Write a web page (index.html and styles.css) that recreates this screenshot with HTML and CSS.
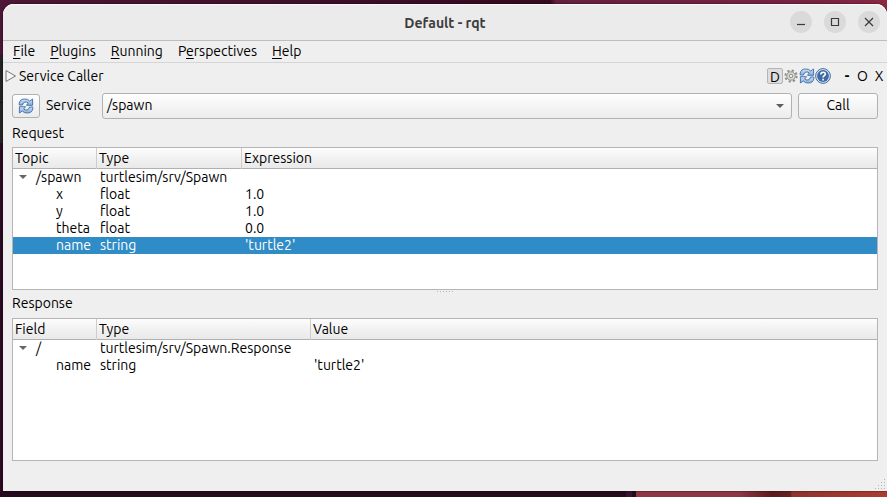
FILE: index.html
```html
<!DOCTYPE html>
<html lang="en">
<head>
<meta charset="utf-8">
<title>Default - rqt</title>
<link rel="stylesheet" href="styles.css">
</head>
<body>
<svg class="defs" width="0" height="0" aria-hidden="true">
  <defs>
    <linearGradient id="blue" x1="0" y1="0" x2="0" y2="1"><stop offset="0" stop-color="#cfe0f3"/><stop offset="1" stop-color="#83aedb"/></linearGradient>
    <symbol id="refresh" viewBox="0 0 16 16">
      <path d="M1.2 7V5.2Q2 1 6.5 1Q10 .8 11.7 3L14.6 1V7.3H8.5L10.3 5Q9 3.7 7 4Q5 4.4 4.5 7Z" fill="url(#blue)" stroke="#3b6ca9" stroke-width=".9"/>
      <path d="M14.8 9V10.8Q14 15 9.5 15Q6 15.2 4.3 13L1.4 15V8.7H7.5L5.7 11Q7 12.3 9 12Q11 11.6 11.5 9Z" fill="url(#blue)" stroke="#3b6ca9" stroke-width=".9"/>
    </symbol>
  </defs>
</svg>
<div class="window">
  <header class="titlebar">
    <h1><span class="t-title">Default - rqt</span></h1>
    <div class="controls">
      <svg viewBox="0 0 22 22"><circle cx="11" cy="11" r="11"/><path d="M7 13.5h8"/></svg>
      <svg viewBox="0 0 22 22"><circle cx="11" cy="11" r="11"/><path d="M7.5 7.5h7v7h-7z"/></svg>
      <svg viewBox="0 0 22 22"><circle cx="11" cy="11" r="11"/><path d="M7 7l8 8M15 7l-8 8"/></svg>
    </div>
  </header>
  <nav class="menubar">
    <span class="m-file"><u>F</u>ile</span><span class="m-plugins"><u>P</u>lugins</span><span class="m-running"><u>R</u>unning</span><span class="m-persp">P<u>e</u>rspectives</span><span class="m-help"><u>H</u>elp</span>
  </nav>
  <div class="dock">
    <svg class="tri" viewBox="0 0 12 14"><path d="M1 1.5v11L10.5 7z" fill="#f6f6f6" stroke="#777"/></svg>
    <span class="dock-name">Service Caller</span>
    <div class="dock-tools">
      <span class="dbtn">D</span>
      <svg class="gear" viewBox="0 0 14 14"><circle cx="7" cy="7" r="5.6" fill="none" stroke="#8c8e87" stroke-width="2" stroke-dasharray="2.2 2.2"/><circle cx="7" cy="7" r="4.2" fill="#dddeda" stroke="#8c8e87"/><circle cx="7" cy="7" r="1.8" fill="#eee" stroke="#8c8e87"/></svg>
      <svg class="ref" viewBox="0 0 16 16"><use href="#refresh"/></svg>
      <svg class="help" viewBox="0 0 16 16"><circle cx="8" cy="8" r="7.4" fill="#d5e1ef" stroke="#4b72a5"/><circle cx="8" cy="8" r="5.9" fill="#3f6ca5"/><path d="M5.8 6.5Q5.8 4.2 8.1 4.2Q10.3 4.2 10.3 6.1Q10.3 7.2 9 7.9Q8.1 8.5 8.1 9.5M8.1 10.7v1.7" fill="none" stroke="#fff" stroke-width="1.6"/></svg>
      <span class="dash">-</span><span class="oh">O</span><span class="ex">X</span>
    </div>
  </div>
  <div class="service">
    <button class="btn refresh"><svg viewBox="0 0 16 16"><use href="#refresh"/></svg></button>
    <span class="service-label">Service</span>
    <div class="btn combo"><span class="s-spawn">/spawn</span><svg viewBox="0 0 8 4"><path d="M0 0h8L4 4z" fill="#5c5c5c"/></svg></div>
    <button class="btn call">Call</button>
  </div>
  <div class="label"><span class="l-request">Request</span></div>
  <section class="tree request">
    <div class="row head"><span>Topic</span><span>Type</span><span class="h-expr">Expression</span></div>
    <div class="row"><span class="root"><i></i>/spawn</span><span class="w-type">turtlesim/srv/Spawn</span><span></span></div>
    <div class="row"><span class="leaf">x</span><span>float</span><span>1.0</span></div>
    <div class="row"><span class="leaf">y</span><span>float</span><span>1.0</span></div>
    <div class="row"><span class="leaf">theta</span><span>float</span><span>0.0</span></div>
    <div class="row selected"><span class="leaf">name</span><span>string</span><span>'turtle2'</span></div>
  </section>
  <div class="splitter"><i></i><i></i><i></i><i></i><i></i><i></i></div>
  <div class="label second"><span class="l-response">Response</span></div>
  <section class="tree response">
    <div class="row head"><span>Field</span><span>Type</span><span>Value</span></div>
    <div class="row"><span class="root"><i></i>/</span><span class="w-type">turtlesim/srv/Spawn.Response</span><span></span></div>
    <div class="row"><span class="leaf">name</span><span>string</span><span>'turtle2'</span></div>
  </section>
  <footer><svg viewBox="0 0 11 11"><path d="M9 0h1v1h-1zM6 3h1v1h-1zM9 3h1v1h-1zM3 6h1v1h-1zM6 6h1v1h-1zM9 6h1v1h-1zM0 9h1v1h-1zM3 9h1v1h-1zM6 9h1v1h-1zM9 9h1v1h-1z" fill="#b5b5b5"/></svg></footer>
</div>
</body>
</html>
```
FILE: styles.css
```css
* { box-sizing: border-box; }
body {
  margin: 0; width: 887px; height: 497px; overflow: hidden;
  padding: 4px 0 0 3px;
  font: 14px/17px Ubuntu, "Noto Sans", sans-serif;
  color: #000; white-space: nowrap;
  background:
    linear-gradient(90deg, #260a20 0 626px, #34142e 626px 632px, #220c20 632px 636px, #8e3644 636px 740px, #5d1a1d 772px, #64201f 790px, #8e332e 792px, #ab3c31 887px) 0 491px / 887px 6px no-repeat,
    linear-gradient(90deg, #4d1637 0, #3d0f2b 330px, #35091f 550px, #65203f 556px, #7b2142 820px, #8d2743 887px) 0 0 / 887px 20px no-repeat,
    linear-gradient(180deg, #4d1637 0 55px, #242424 55px 102px, #151515 102px 103px, #242424 103px 143px, #2b0a22 143px);
}
.defs { position: absolute; }
.window {
  width: 884px; height: 487px; background: #efefef;
  border-radius: 11px 11px 0 0; display: flex; flex-direction: column;
  box-shadow: 0 0 2px rgba(0,0,0,.8);
}
.titlebar {
  height: 37px; flex: none; display: grid; grid-template-columns: 1fr auto 1fr; align-items: center;
  background: #ebebeb; border-radius: 11px 11px 0 0; border-bottom: 1px solid #bdbdbd;
  box-shadow: inset 0 1px #fafafa;
}
h1 { grid-column: 2; margin: 1px 0 0; font-size: 14px; line-height: 18px; color: #3d3d3d; font-weight: 700; }
.controls { display: flex; gap: 12px; justify-content: flex-end; padding-right: 7px; }
.controls svg { width: 22px; height: 22px; }
.controls circle { fill: #dadada; }
.controls path { fill: none; stroke: #3a3a3a; stroke-width: 1.2; }
.menubar { height: 22px; flex: none; display: flex; gap: 15px; padding: 2px 0 0 10px; border-bottom: 1px solid #d5d5d5; }
u { text-underline-offset: 2px; text-decoration-thickness: 1px; text-decoration-skip-ink: none; }
.dock { height: 30px; flex: none; display: flex; align-items: flex-start; padding: 5px 3px 0 2px; }
.tri { width: 12px; height: 14px; margin-top: 1px; }
.dock-name { margin-left: 2px; }
.dock-tools { display: flex; margin-left: auto; }
.dbtn { width: 16px; height: 16px; border: 1px solid #b4b4b4; border-radius: 2px; background: #dedede; text-align: center; line-height: 16px; }
.gear { width: 14px; height: 14px; margin: 1px 1px 0 1px; }
.ref, .help { width: 16px; height: 16px; }
.ref { margin-left: 0; }
.dash { margin-left: 13px; width: 6px; text-align: center; font-weight: 700; }
.oh { margin-left: 6px; width: 13px; text-align: center; }
.ex { margin-left: 5px; width: 10px; text-align: center; }
.service { height: 25px; flex: none; display: flex; align-items: center; padding: 0 9px; }
.btn { font: inherit; color: inherit; border: 1px solid #b1b1b1; border-radius: 3px; background: linear-gradient(#fefefe, #ececec); padding: 0; height: 26px; }
.refresh { width: 28px; height: 24px; display: grid; place-items: center; }
.refresh svg { width: 16px; height: 16px; }
.service-label { margin-left: 6px; width: 50px; }
.combo { width: 690px; margin-left: 6px; padding: 0 7px 0 4px; display: flex; align-items: center; justify-content: space-between; }
.combo svg { width: 8px; height: 4px; }
.call { width: 80px; margin-left: 6px; }
.label { height: 29px; flex: none; padding: 7px 9px 0; }
.second { height: 25px; padding-top: 2px; }
.tree { margin: 0 9px; height: 143px; flex: none; background: #fff; border: 1px solid #b5b5b5; }
.row { display: grid; height: 17px; }
.request .row { grid-template-columns: 84px 145px 1fr; }
.response .row { grid-template-columns: 84px 214px 1fr; }
.row > span { padding-left: 3px; overflow: visible; }
.row > span:first-child { padding-left: 2px; }
.head { height: 21px; line-height: 21px; background: linear-gradient(#fdfdfd, #f2f2f2 50%, #e9e9e9); border-bottom: 1px solid #b0b0b0; }
.head > span:not(:last-child) { border-right: 1px solid #cdcdcd; }
.head > span:not(:first-child) { padding-left: 2px; }
.row .root, .row > .root:first-child { padding-left: 6px; display: flex; align-items: center; }
.root i { border: 4px solid transparent; border-top-color: #666; border-bottom: 0; margin-right: 9px; margin-top: -1px; }
.row > .leaf:first-child { padding-left: 43px; }
.selected { background: #308cc6; color: #fff; }
.splitter { height: 3px; flex: none; display: flex; gap: 2px; justify-content: center; padding: 1px 0 0; }
.splitter i { width: 1px; height: 1px; background: #b5b5b5; }
footer { margin-top: auto; display: flex; justify-content: flex-end; padding: 0 1px 1px; }
footer svg { width: 11px; height: 11px; }
```
